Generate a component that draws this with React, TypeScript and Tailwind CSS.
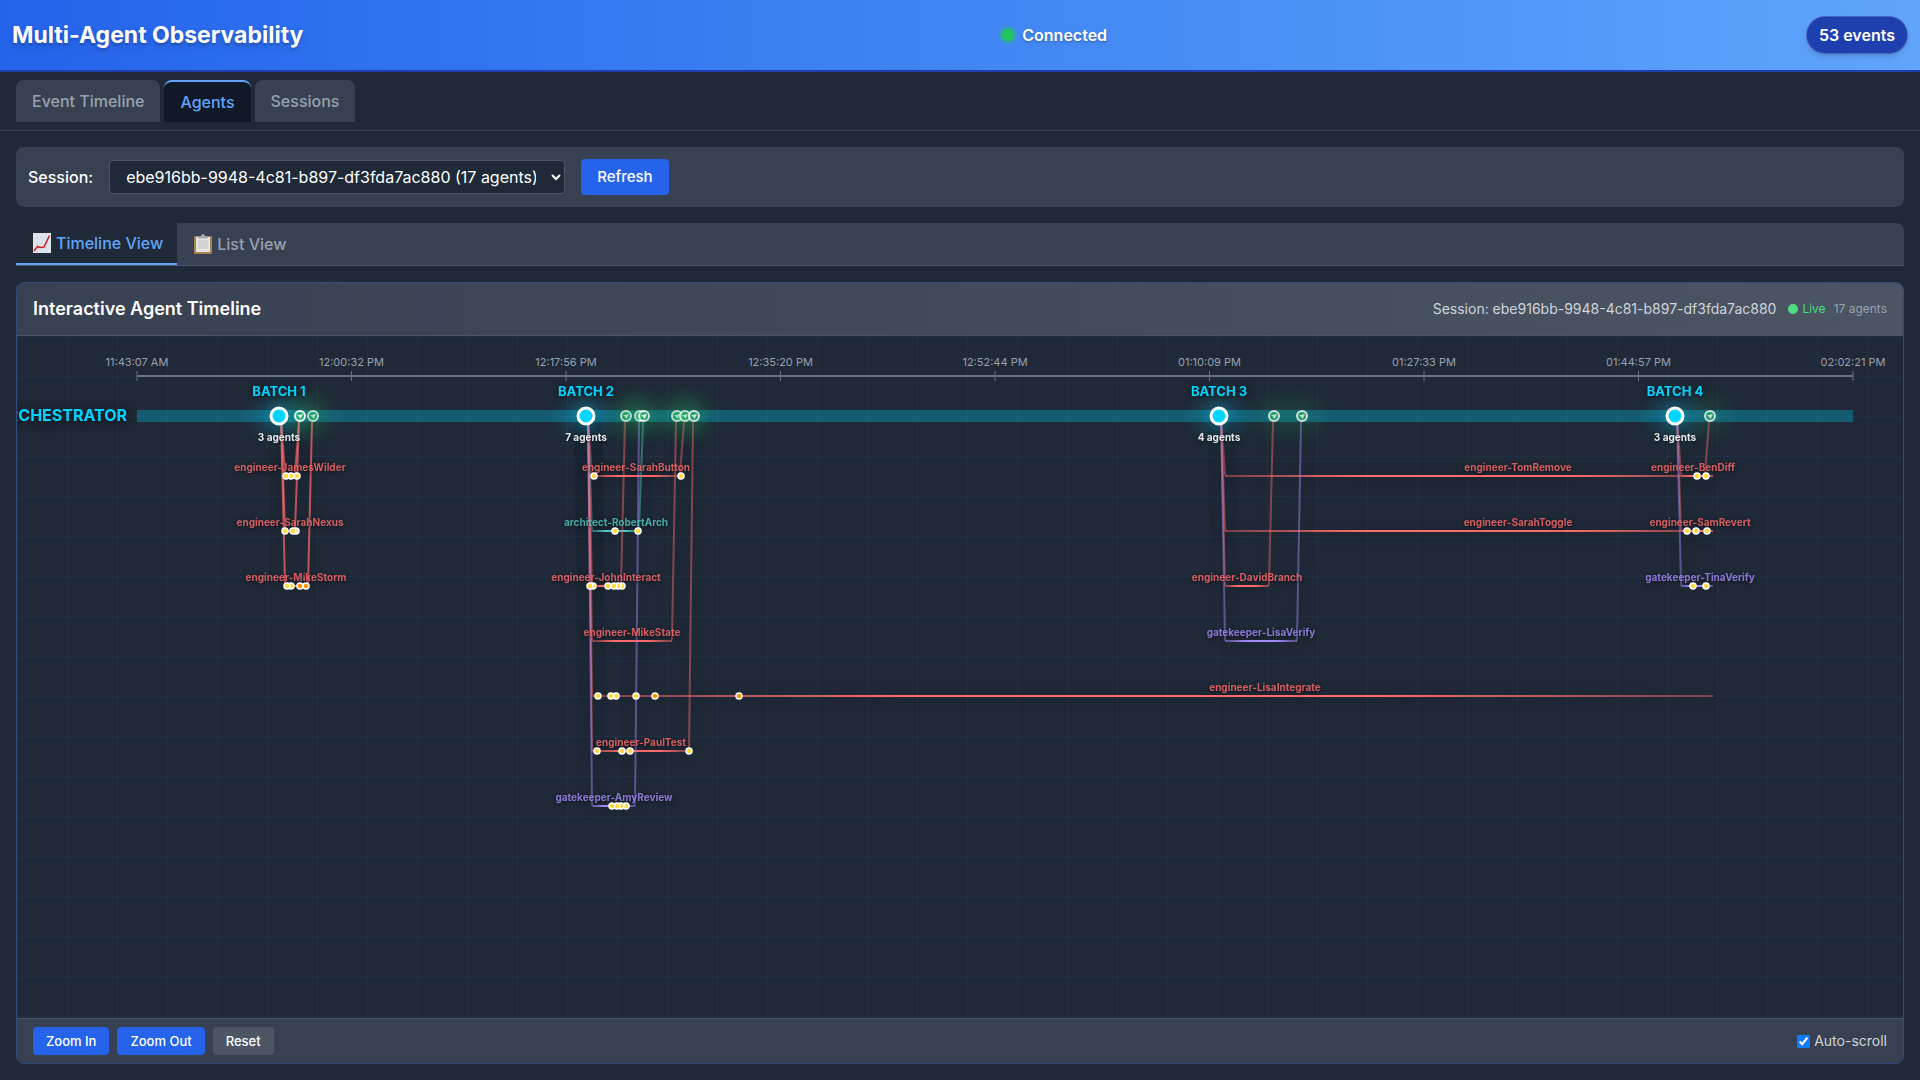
import React from "react";

const RED = "#ff6b6b";
const TEAL = "#4ecdc4";
const PURPLE = "#a78bfa";

const ticks = [
  "11:43:07 AM", "12:00:32 PM", "12:17:56 PM", "12:35:20 PM", "12:52:44 PM",
  "01:10:09 PM", "01:27:33 PM", "01:44:57 PM", "02:02:21 PM",
];

const batches = [
  { x: 262, name: "BATCH 1", count: "3 agents" },
  { x: 569, name: "BATCH 2", count: "7 agents" },
  { x: 1202, name: "BATCH 3", count: "4 agents" },
  { x: 1658, name: "BATCH 4", count: "3 agents" },
];

type Agent = {
  name: string;
  from: number;
  lane: number;
  color: string;
  label: number;
  back?: number;
  until?: number;
  msgs: number[];
  late?: number[];
  strong?: boolean;
};

const agents: Agent[] = [
  { name: "engineer-JamesWilder", from: 262, lane: 0, color: RED, label: 273, back: 283, msgs: [274, 269, 280], strong: true },
  { name: "engineer-SarahNexus", from: 262, lane: 1, color: RED, label: 273, back: 283, msgs: [268, 279, 276], strong: true },
  { name: "engineer-MikeStorm", from: 262, lane: 2, color: RED, label: 279, back: 296, msgs: [274, 270], late: [283, 289], strong: true },
  { name: "engineer-SarahButton", from: 569, lane: 0, color: RED, label: 619, back: 668, msgs: [577, 664] },
  { name: "architect-RobertArch", from: 569, lane: 1, color: TEAL, label: 599, back: 627, msgs: [598, 621] },
  { name: "engineer-JohnInteract", from: 569, lane: 2, color: RED, label: 589, back: 609, msgs: [576, 573, 605, 601, 597, 591] },
  { name: "engineer-MikeState", from: 569, lane: 3, color: RED, label: 615, back: 660, msgs: [] },
  { name: "engineer-LisaIntegrate", from: 569, lane: 4, color: RED, label: 1248, until: 1696, msgs: [581, 599, 594, 619], late: [638, 722] },
  { name: "engineer-PaulTest", from: 569, lane: 5, color: RED, label: 624, back: 677, msgs: [580, 605, 613, 672] },
  { name: "gatekeeper-AmyReview", from: 569, lane: 6, color: PURPLE, label: 597, back: 623, msgs: [609, 604, 600, 595] },
  { name: "engineer-TomRemove", from: 1202, lane: 0, color: RED, label: 1501, until: 1696, msgs: [] },
  { name: "engineer-SarahToggle", from: 1202, lane: 1, color: RED, label: 1501, until: 1696, msgs: [] },
  { name: "engineer-DavidBranch", from: 1202, lane: 2, color: RED, label: 1230, back: 1257, msgs: [] },
  { name: "gatekeeper-LisaVerify", from: 1202, lane: 3, color: PURPLE, label: 1244, back: 1285, msgs: [] },
  { name: "engineer-BenDiff", from: 1658, lane: 0, color: RED, label: 1676, back: 1693, until: 1696, msgs: [1680, 1689] },
  { name: "engineer-SamRevert", from: 1658, lane: 1, color: RED, label: 1683, until: 1696, msgs: [1670, 1679, 1690] },
  { name: "gatekeeper-TinaVerify", from: 1658, lane: 2, color: PURPLE, label: 1683, until: 1696, msgs: [1676, 1689] },
];

const returns = [
  { x: 296, soft: true }, { x: 283, soft: false },
  { x: 609, soft: true }, { x: 623, soft: true }, { x: 627, soft: true },
  { x: 660, soft: true }, { x: 668, soft: true }, { x: 677, soft: true },
  { x: 1257, soft: true }, { x: 1285, soft: true }, { x: 1693, soft: true },
];

const laneY = (lane: number) => 140 + lane * 55;

function AgentPath({ a }: { a: Agent }) {
  const y = laneY(a.lane);
  const start = a.from + 6;
  const end = a.until ?? (a.back ?? 0) - 5;
  const id = "fade-" + a.name;
  const side = a.strong ? 0.7 : 0.45;
  return (
    <g fill="none" stroke={a.color} strokeWidth="2" className="drop-shadow-[0_2px_7px_rgba(0,0,0,0.4)]">
      <linearGradient id={id} gradientUnits="userSpaceOnUse" x1={start} x2={end} y1="0" y2="0">
        <stop offset="0" stopColor={a.color} stopOpacity="0.4" />
        <stop offset="0.28" stopColor={a.color} />
        <stop offset="0.7" stopColor={a.color} />
        <stop offset="1" stopColor={a.color} stopOpacity="0.4" />
      </linearGradient>
      <path d={`M${a.from + 2} 82L${start} ${y - 2}Q${start} ${y} ${start + 2} ${y}`} opacity={side} />
      <path d={`M${start + 1} ${y}H${end}`} stroke={`url(#${id})`} />
      {a.back && <path d={`M${a.back - 6} ${y}L${a.back - 5} ${y - 2}L${a.back - 1} 86`} opacity={side} />}
    </g>
  );
}

function Timeline() {
  return (
    <svg className="block h-full w-full" role="img" aria-label="Agent timeline">
      <defs>
        <pattern id="grid" width="50" height="40" patternUnits="userSpaceOnUse">
          <path d="M50 0H0V40" fill="none" stroke="#1e3a5f" strokeWidth="1" opacity="0.7" />
        </pattern>
        <radialGradient id="cyanGlow">
          <stop offset="0" stopColor="#00d4ff" stopOpacity="0.35" />
          <stop offset="0.5" stopColor="#00d4ff" stopOpacity="0.1" />
          <stop offset="1" stopColor="#00d4ff" stopOpacity="0" />
        </radialGradient>
        <radialGradient id="greenGlow">
          <stop offset="0" stopColor="#22c55e" stopOpacity="0.2" />
          <stop offset="0.5" stopColor="#22c55e" stopOpacity="0.08" />
          <stop offset="1" stopColor="#22c55e" stopOpacity="0" />
        </radialGradient>
      </defs>
      <rect width="100%" height="100%" fill="url(#grid)" />

      <g stroke="#6b7280">
        <path d="M120 40H1836" strokeWidth="2" />
        {ticks.map((t, i) => (
          <path key={t} d={`M${120 + i * 214.5} 35V45`} />
        ))}
      </g>
      <g className="fill-gray-400 text-[11px]" textAnchor="middle">
        {ticks.map((t, i) => (
          <text key={t} x={120 + i * 214.5} y="30">{t}</text>
        ))}
      </g>

      <rect x="120" y="74" width="1716" height="12" fill="#00d4ff" opacity="0.3" />
      <text x="110" y="85" textAnchor="end" className="fill-[#00d4ff] text-[16px] font-bold drop-shadow-[0_2px_6px_rgba(0,0,0,0.8)]">
        ORCHESTRATOR
      </text>

      {agents.map((a) => <AgentPath key={a.name} a={a} />)}

      {returns.map((r) => (
        <g key={r.x} opacity={r.soft ? 0.8 : 1}>
          <circle cx={r.x} cy="80" r="32" fill="url(#greenGlow)" />
          <circle cx={r.x} cy="80" r="5" fill="#22b05e" stroke="#fff" strokeWidth="2" />
          <path d={`M${r.x - 3} 79.500L${r.x + 3} 78L${r.x + 0.5} 83L${r.x - 0.5} 81Z`} fill="#fff" />
        </g>
      ))}

      {batches.map((b) => (
        <g key={b.x} textAnchor="middle">
          <circle cx={b.x} cy="80" r="36" fill="url(#cyanGlow)" />
          <circle cx={b.x} cy="80" r="8" fill="#00d4ff" stroke="#fff" strokeWidth="3" />
          <text x={b.x} y="60" className="fill-[#00d4ff] text-[13px] font-bold drop-shadow-[0_1px_3px_rgba(0,0,0,0.8)]">{b.name}</text>
          <text x={b.x} y="105" className="fill-gray-200 text-[10px] font-bold drop-shadow-[0_1px_2px_rgba(0,0,0,0.8)]">{b.count}</text>
        </g>
      ))}

      {agents.map((a) => (
        <g key={a.name}>
          <text x={a.label} y={laneY(a.lane) - 5} textAnchor="middle" fill={a.color} opacity="0.8" className="text-[10px] font-bold drop-shadow-[0_1px_2px_rgba(0,0,0,0.8)]">
            {a.name}
          </text>
          {a.msgs.map((m) => (
            <circle key={m} cx={m} cy={laneY(a.lane)} r="3" fill="#ffd93d" stroke="#fff" strokeWidth="1.500" />
          ))}
          {a.late?.map((m) => (
            <circle key={m} cx={m} cy={laneY(a.lane)} r="3" fill="#ff9500" stroke="#fff" strokeWidth="1.500" />
          ))}
        </g>
      ))}
    </svg>
  );
}

function ChartIcon() {
  return (
    <svg viewBox="0 0 18 20" className="size-5" aria-hidden="true">
      <rect width="18" height="20" fill="#dfe6ea" />
      <path d="M4.500 0V20M9 0V20M13.500 0V20M0 5H18M0 10H18M0 15H18" stroke="#c9d5dc" strokeWidth="0.500" />
      <path d="M1 18L4.500 13.500L7 14.500L11 14L16.500 2.500" fill="none" stroke="#cf1f2c" strokeWidth="1.500" />
    </svg>
  );
}

function ClipboardIcon() {
  return (
    <svg viewBox="0 0 18 20" className="size-5" aria-hidden="true">
      <rect y="2" width="18" height="18" rx="1" fill="#a9814f" />
      <rect x="2" y="3" width="14" height="15" fill="#e4e4e4" />
      <rect x="4" y="6" width="10" height="9" fill="#d3d3d3" />
      <path d="M4 4.500V2.500H7Q7 0 9 0T11 2.500H14V4.500Z" fill="#a6abb0" />
    </svg>
  );
}

export default function App() {
  return (
    <div className="flex min-h-screen flex-col bg-[#1f2937] font-['Inter','Liberation_Sans',sans-serif] text-base text-white">
      <header className="flex h-[72px] items-center justify-between border-b-2 border-[#1e40af] bg-linear-to-r from-[#2563eb] to-[#60a5fa] px-3">
        <h1 className="text-[23px] font-bold text-shadow-lg">Multi-Agent Observability</h1>
        <div className="flex items-center gap-2 font-semibold text-shadow-md">
          <span className="size-3 rounded-full bg-[#22c55e] ring-3 ring-[#22c55e]/40" />
          Connected
        </div>
        <div className="rounded-full border border-white/20 bg-[#1e40af] px-3 py-1.5 font-semibold shadow-md">53 events</div>
      </header>

      <nav className="flex gap-1 border-b border-[#374151] px-4 py-2 font-medium text-gray-400">
        <button className="h-[42px] rounded-t-lg bg-[#374151] px-4">Event Timeline</button>
        <button className="h-[42px] rounded-t-lg border-t-2 border-[#60a5fa] bg-[#111827] px-4 text-[#60a5fa]">Agents</button>
        <button className="h-[42px] rounded-t-lg bg-[#374151] px-4">Sessions</button>
      </nav>

      <main className="flex flex-1 flex-col gap-4 p-4">
        <div className="flex h-[60px] items-center gap-4 rounded-lg bg-[#374151] px-3">
          <label htmlFor="session" className="font-medium">Session:</label>
          <select id="session" className="h-[34px] w-[456px] rounded border border-[#4b5563] bg-[#1f2937] px-3">
            <option>ebe916bb-9948-4c81-b897-df3fda7ac880 (17 agents)</option>
          </select>
          <button className="h-9 rounded bg-[#2563eb] px-4 text-[15px] font-medium">Refresh</button>
        </div>

        <div className="flex h-[43px] overflow-hidden rounded-t-lg border-b border-[#4b5563] bg-[#374151] font-medium text-gray-400">
          <button className="flex items-center gap-1 border-b-2 border-[#60a5fa] bg-[#1f2937] pr-3.5 pl-4 text-[#60a5fa]">
            <ChartIcon />
            Timeline View
          </button>
          <button className="flex items-center gap-1 px-4">
            <ClipboardIcon />
            List View
          </button>
        </div>

        <section className="flex flex-1 flex-col overflow-hidden rounded-lg border border-[#2f4d7d]">
          <div className="flex h-[53px] items-center justify-between border-b border-[#4b5563] bg-linear-to-r from-[#374151] to-[#4b5563] px-4">
            <h2 className="text-lg font-semibold">Interactive Agent Timeline</h2>
            <div className="flex items-center gap-3 text-sm text-gray-300">
              <span>Session: ebe916bb-9948-4c81-b897-df3fda7ac880</span>
              <div className="flex items-center gap-2 text-xs text-gray-400">
                <span className="flex items-center gap-1 text-[#4ade80]">
                  <span className="size-2.5 rounded-full bg-[#4ade80]" />
                  Live
                </span>
                <span>17 agents</span>
              </div>
            </div>
          </div>
          <div className="min-h-[520px] flex-1 basis-0">
            <Timeline />
          </div>
          <div className="flex h-[45px] items-center justify-between border-t border-[#4b5563] bg-[#374151] px-4 text-sm">
            <div className="flex gap-2 text-[13px] font-medium">
              <button className="h-7 rounded bg-[#2563eb] px-[13px]">Zoom In</button>
              <button className="h-7 rounded bg-[#2563eb] px-[13px]">Zoom Out</button>
              <button className="h-7 rounded bg-[#4b5563] px-[13px]">Reset</button>
            </div>
            <label className="flex items-center gap-1 text-gray-300">
              <input type="checkbox" defaultChecked className="size-[13px] accent-[#0a7aff]" />
              Auto-scroll
            </label>
          </div>
        </section>
      </main>
    </div>
  );
}
